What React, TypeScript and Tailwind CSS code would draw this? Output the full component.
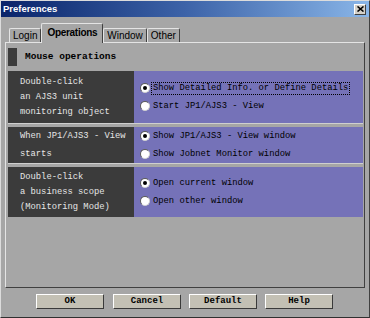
import React from 'react';

const mono = { fontFamily: '"Liberation Mono", "Courier New", monospace' };
const sans = { fontFamily: '"Liberation Sans", Arial, sans-serif' };

type Row = {
  label: string[];
  lead: string;
  height: string;
  options: { text: string; checked?: boolean; focus?: boolean }[];
};

const rows: Row[] = [
  {
    label: ['Double-click', 'an AJS3 unit', 'monitoring object'],
    lead: 'leading-[15px]',
    height: 'h-[52px]',
    options: [
      { text: 'Show Detailed Info. or Define Details', checked: true, focus: true },
      { text: 'Start JP1/AJS3 - View' },
    ],
  },
  {
    label: ['When JP1/AJS3 - View', 'starts'],
    lead: 'leading-[18px]',
    height: 'h-[36px]',
    options: [
      { text: 'Show JP1/AJS3 - View window', checked: true },
      { text: 'Show Jobnet Monitor window' },
    ],
  },
  {
    label: ['Double-click', 'a business scope', '(Monitoring Mode)'],
    lead: 'leading-[15px]',
    height: 'h-[50px]',
    options: [
      { text: 'Open current window', checked: true },
      { text: 'Open other window' },
    ],
  },
];

function Radio({ checked }: { checked?: boolean }) {
  return (
    <span className="w-[10px] h-[10px] rounded-full bg-white border border-t-[#5a5a5a] border-l-[#5a5a5a] border-r-[#d0d0d0] border-b-[#d0d0d0] flex items-center justify-center shrink-0">
      {checked && <span className="w-[4px] h-[4px] rounded-full bg-black" />}
    </span>
  );
}

function Tab({ label, active }: { label: string; active?: boolean }) {
  if (active) {
    return (
      <div
        className="relative z-10 -mb-px h-[20px] px-[5px] flex items-start pt-[4px] leading-none bg-[#a6a6a6] border-t border-l border-t-[#e4e4e4] border-l-[#e4e4e4] border-r border-r-[#404040] rounded-t-[2px] text-[10px] font-bold tracking-[-0.3px] text-black"
        style={sans}
      >
        {label}
      </div>
    );
  }
  return (
    <div
      className="h-[14px] px-[3px] flex items-start pt-[2px] leading-none bg-[#a6a6a6] border-t border-l border-t-[#e4e4e4] border-l-[#e4e4e4] border-r border-r-[#404040] rounded-t-[2px] text-[10px] text-black"
      style={sans}
    >
      {label}
    </div>
  );
}

function Button({ label, extra = '' }: { label: string; extra?: string }) {
  return (
    <button
      className={`w-[68px] h-[15px] bg-[#c3c0b4] border border-t-white border-l-white border-r-[#3a3a3a] border-b-[#3a3a3a] text-[9px] leading-[13px] text-black font-bold ${extra}`}
      style={mono}
    >
      {label}
    </button>
  );
}

export default function App() {
  return (
    <div className="w-[370px] h-[318px] bg-[#a6a6a6] flex flex-col border border-t-[#dcdcdc] border-l-[#dcdcdc] border-r-[#404040] border-b-[#303030] overflow-hidden">
      {/* title bar */}
      <div className="h-[16px] flex items-center justify-between pl-[2px] pr-[3px] bg-linear-to-r from-[#0a246a] via-[#3d63a8] to-[#8ab6e8]">
        <span className="text-[9.5px] font-bold text-white" style={sans}>
          Preferences
        </span>
        <span className="w-[12px] h-[11px] bg-[#d4d0c8] border border-t-white border-l-white border-r-[#404040] border-b-[#404040] flex items-center justify-center">
          <svg width="7" height="6" viewBox="0 0 7 6">
            <path d="M0.5 0.5 L6.5 5.5 M6.5 0.5 L0.5 5.5" stroke="#000" strokeWidth="1.6" />
          </svg>
        </span>
      </div>

      {/* tabs */}
      <div className="mt-[6px] h-[19px] flex items-end pl-[8px]">
        <Tab label="Login" />
        <Tab label="Operations" active />
        <Tab label="Window" />
        <Tab label="Other" />
      </div>

      {/* panel */}
      <div className="mx-[4px] h-[246px] border border-t-[#e4e4e4] border-l-[#e4e4e4] border-r-[#404040] border-b-[#404040] pl-[2px] pr-px pt-[4px]">
        <div className="h-[20px] flex items-center gap-[8px]">
          <span className="w-[9px] h-[18px] bg-[#3c3c3c]" />
          <span className="text-[9.5px] font-bold text-black" style={mono}>
            Mouse operations
          </span>
        </div>

        <div className="mt-[4px] flex flex-col">
          {rows.map((r, i) => (
            <React.Fragment key={i}>
              {i > 0 && <div className="h-[4px] border-t border-[#cfcfcf]" />}
              <div className={`${r.height} flex`}>
                <div
                  className={`w-[126px] bg-[#3b3b3b] pl-[12px] flex flex-col justify-center text-[8.8px] text-[#e6e6e6] ${r.lead}`}
                  style={mono}
                >
                  {r.label.map((l) => (
                    <span key={l} className="whitespace-pre">
                      {l}
                    </span>
                  ))}
                </div>
                <div className="flex-1 bg-[#7572b8] pl-[6px] flex flex-col justify-center">
                  {r.options.map((o) => (
                    <div key={o.text} className="h-[18px] flex items-center gap-[2px]">
                      <Radio checked={o.checked} />
                      <span
                        className={`text-[8.8px] leading-[11px] text-black px-px whitespace-pre ${
                          o.focus ? 'outline outline-1 outline-dotted outline-black' : ''
                        }`}
                        style={mono}
                      >
                        {o.text}
                      </span>
                    </div>
                  ))}
                </div>
              </div>
            </React.Fragment>
          ))}
        </div>
      </div>

      {/* buttons */}
      <div className="mt-[6px] flex items-start pl-[35px] gap-[8px]">
        <Button label="OK" extra="mr-px" />
        <Button label="Cancel" />
        <Button label="Default" />
        <Button label="Help" />
      </div>
    </div>
  );
}
